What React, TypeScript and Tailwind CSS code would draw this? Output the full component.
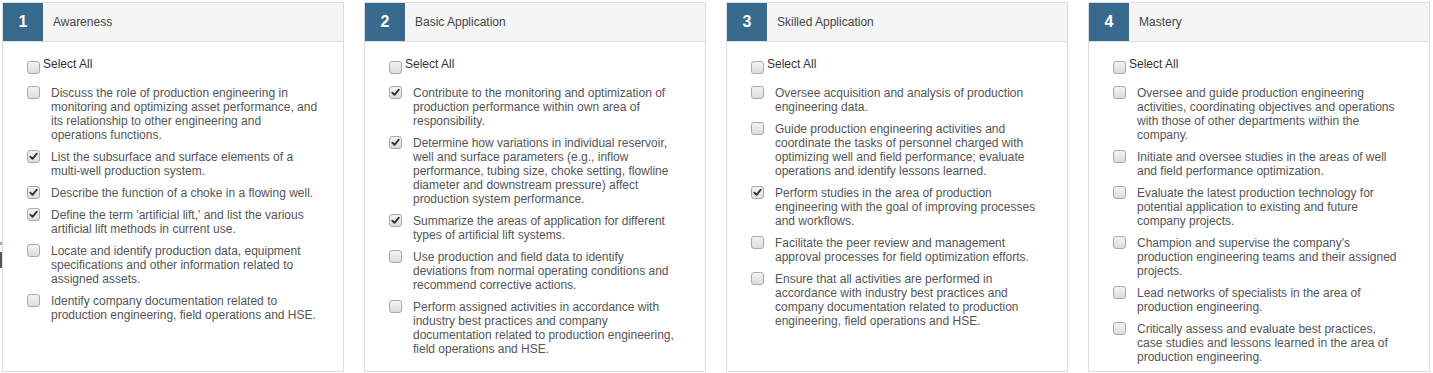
import React from "react";

type Item = { text: string; checked: boolean };

type Level = {
  num: number;
  title: string;
  items: Item[];
};

const levels: Level[] = [
  {
    num: 1,
    title: "Awareness",
    items: [
      {
        text: "Discuss the role of production engineering in monitoring and optimizing asset performance, and its relationship to other engineering and operations functions.",
        checked: false,
      },
      {
        text: "List the subsurface and surface elements of a multi-well production system.",
        checked: true,
      },
      { text: "Describe the function of a choke in a flowing well.", checked: true },
      {
        text: "Define the term 'artificial lift,' and list the various artificial lift methods in current use.",
        checked: true,
      },
      {
        text: "Locate and identify production data, equipment specifications and other information related to assigned assets.",
        checked: false,
      },
      {
        text: "Identify company documentation related to production engineering, field operations and HSE.",
        checked: false,
      },
    ],
  },
  {
    num: 2,
    title: "Basic Application",
    items: [
      {
        text: "Contribute to the monitoring and optimization of production performance within own area of responsibility.",
        checked: true,
      },
      {
        text: "Determine how variations in individual reservoir, well and surface parameters (e.g., inflow performance, tubing size, choke setting, flowline diameter and downstream pressure) affect production system performance.",
        checked: true,
      },
      {
        text: "Summarize the areas of application for different types of artificial lift systems.",
        checked: true,
      },
      {
        text: "Use production and field data to identify deviations from normal operating conditions and recommend corrective actions.",
        checked: false,
      },
      {
        text: "Perform assigned activities in accordance with industry best practices and company documentation related to production engineering, field operations and HSE.",
        checked: false,
      },
    ],
  },
  {
    num: 3,
    title: "Skilled Application",
    items: [
      {
        text: "Oversee acquisition and analysis of production engineering data.",
        checked: false,
      },
      {
        text: "Guide production engineering activities and coordinate the tasks of personnel charged with optimizing well and field performance; evaluate operations and identify lessons learned.",
        checked: false,
      },
      {
        text: "Perform studies in the area of production engineering with the goal of improving processes and workflows.",
        checked: true,
      },
      {
        text: "Facilitate the peer review and management approval processes for field optimization efforts.",
        checked: false,
      },
      {
        text: "Ensure that all activities are performed in accordance with industry best practices and company documentation related to production engineering, field operations and HSE.",
        checked: false,
      },
    ],
  },
  {
    num: 4,
    title: "Mastery",
    items: [
      {
        text: "Oversee and guide production engineering activities, coordinating objectives and operations with those of other departments within the company.",
        checked: false,
      },
      {
        text: "Initiate and oversee studies in the areas of well and field performance optimization.",
        checked: false,
      },
      {
        text: "Evaluate the latest production technology for potential application to existing and future company projects.",
        checked: false,
      },
      {
        text: "Champion and supervise the company's production engineering teams and their assigned projects.",
        checked: false,
      },
      {
        text: "Lead networks of specialists in the area of production engineering.",
        checked: false,
      },
      {
        text: "Critically assess and evaluate best practices, case studies and lessons learned in the area of production engineering.",
        checked: false,
      },
    ],
  },
];

function Box({ checked }: { checked: boolean }) {
  return (
    <span className="flex h-[13px] w-[13px] shrink-0 items-center justify-center rounded-[3px] border border-[#a9a9a9] bg-gradient-to-b from-[#f4f4f4] to-[#dcdcdc]">
      {checked && (
        <svg width="9" height="9" viewBox="0 0 9 9">
          <path
            d="M1.3 4.6 L3.5 6.9 L7.8 1.6"
            fill="none"
            stroke="#333"
            strokeWidth="1.8"
            strokeLinecap="round"
            strokeLinejoin="round"
          />
        </svg>
      )}
    </span>
  );
}

function LevelCard({ level }: { level: Level }) {
  return (
    <section className="h-[370px] w-[342px] shrink-0 border border-[#dcdcdc] bg-white">
      <div className="flex h-[39px] border-b border-[#dcdcdc] bg-[#f5f5f5]">
        <div className="flex w-10 items-center justify-center bg-[#386a8d] text-[16px] font-bold text-white">
          {level.num}
        </div>
        <div className="flex items-center pl-[10px] text-[12px] text-[#444]">
          {level.title}
        </div>
      </div>

      <div className="pl-[24px] pt-[15px] text-[12px] leading-[14px] text-[#555]">
        <label className="flex">
          <span className="mt-[4px]">
            <Box checked={false} />
          </span>
          <span className="ml-[3px] text-[#333]">Select All</span>
        </label>

        <ul className="mt-[12px]">
          {level.items.map((item, i) => (
            <li key={i} className="mb-2 flex">
              <Box checked={item.checked} />
              <span className="ml-[11px] w-[266.6px]">{item.text}</span>
            </li>
          ))}
        </ul>
      </div>
    </section>
  );
}

export default function App() {
  return (
    <main className="relative h-[373px] w-[1433px] overflow-hidden bg-white font-['Liberation_Sans',Arial,sans-serif]">
      {/* clipped element peeking in at the left edge */}
      <div className="absolute left-0 top-[242px] h-[3px] w-[2px] bg-[#b8a77a]" />
      <div className="absolute left-0 top-[252px] h-[16px] w-[2px] bg-[#555]" />

      <div className="flex gap-5 pl-[2px] pt-[2px]">
        {levels.map((level) => (
          <LevelCard key={level.num} level={level} />
        ))}
      </div>
    </main>
  );
}
